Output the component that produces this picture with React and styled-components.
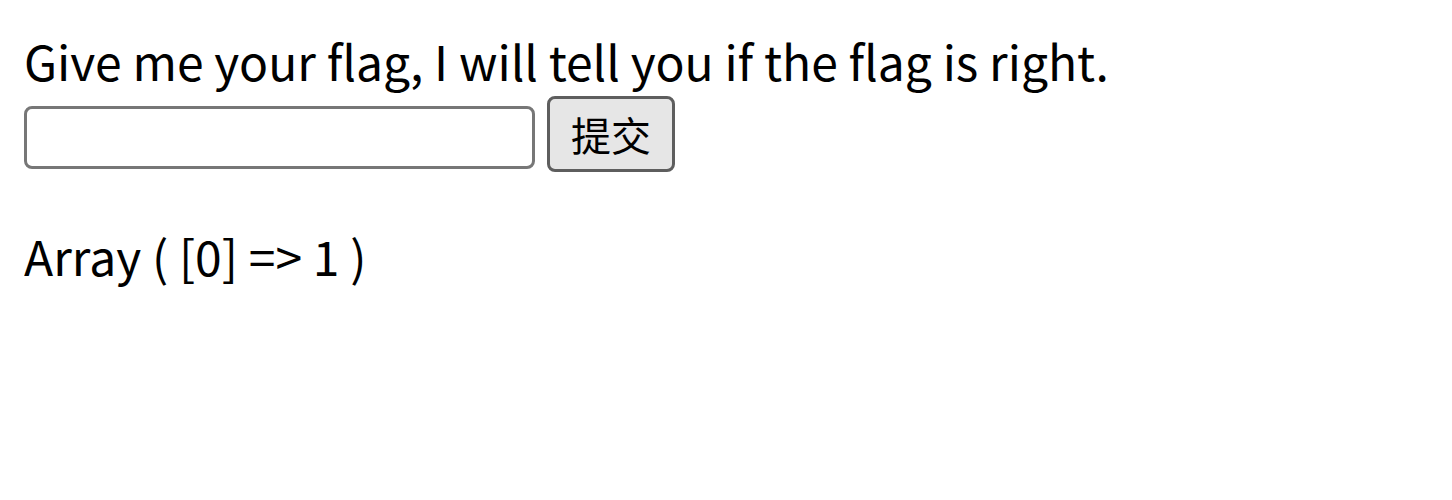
import React from "react";
import styled, { createGlobalStyle } from "styled-components";

const GlobalStyles = createGlobalStyle`
  body {
    margin: 24px;
    background: #fff;
    color: #000;
    font-family: "Noto Sans CJK SC", sans-serif;
    font-size: 48px;
  }
`;

const Page = styled.div`
  display: flex;
  flex-direction: column;
`;

const Prompt = styled.div`
  line-height: 72px;
`;

const Form = styled.form`
  display: flex;
  align-items: flex-start;
  gap: 12px;
  margin: 0;
`;

const Field = styled.input`
  box-sizing: border-box;
  width: 511px;
  height: 63px;
  margin: 10px 0 0;
  border: 3px solid #777777;
  border-radius: 8px;
  background: #fff;
  font-size: 32px;
  font-family: "Noto Sans CJK SC", sans-serif;
`;

const Submit = styled.button`
  box-sizing: border-box;
  width: 128px;
  height: 76px;
  margin: 0;
  padding: 0;
  border: 3px solid #5e5e5e;
  border-radius: 8px;
  background: #e6e6e6;
  color: #000;
  font-size: 40px;
  font-family: "Noto Sans CJK SC", sans-serif;
`;

const Result = styled.div`
  margin-top: 47px;
  line-height: 72px;
`;

export default function App() {
  return (
    <>
      <GlobalStyles />
      <Page>
        <Prompt>Give me your flag, I will tell you if the flag is right.</Prompt>
        <Form onSubmit={(e) => e.preventDefault()}>
          <Field type="text" name="flag" />
          <Submit type="submit">提交</Submit>
        </Form>
        <Result>Array ( [0] =&gt; 1 )</Result>
      </Page>
    </>
  );
}
